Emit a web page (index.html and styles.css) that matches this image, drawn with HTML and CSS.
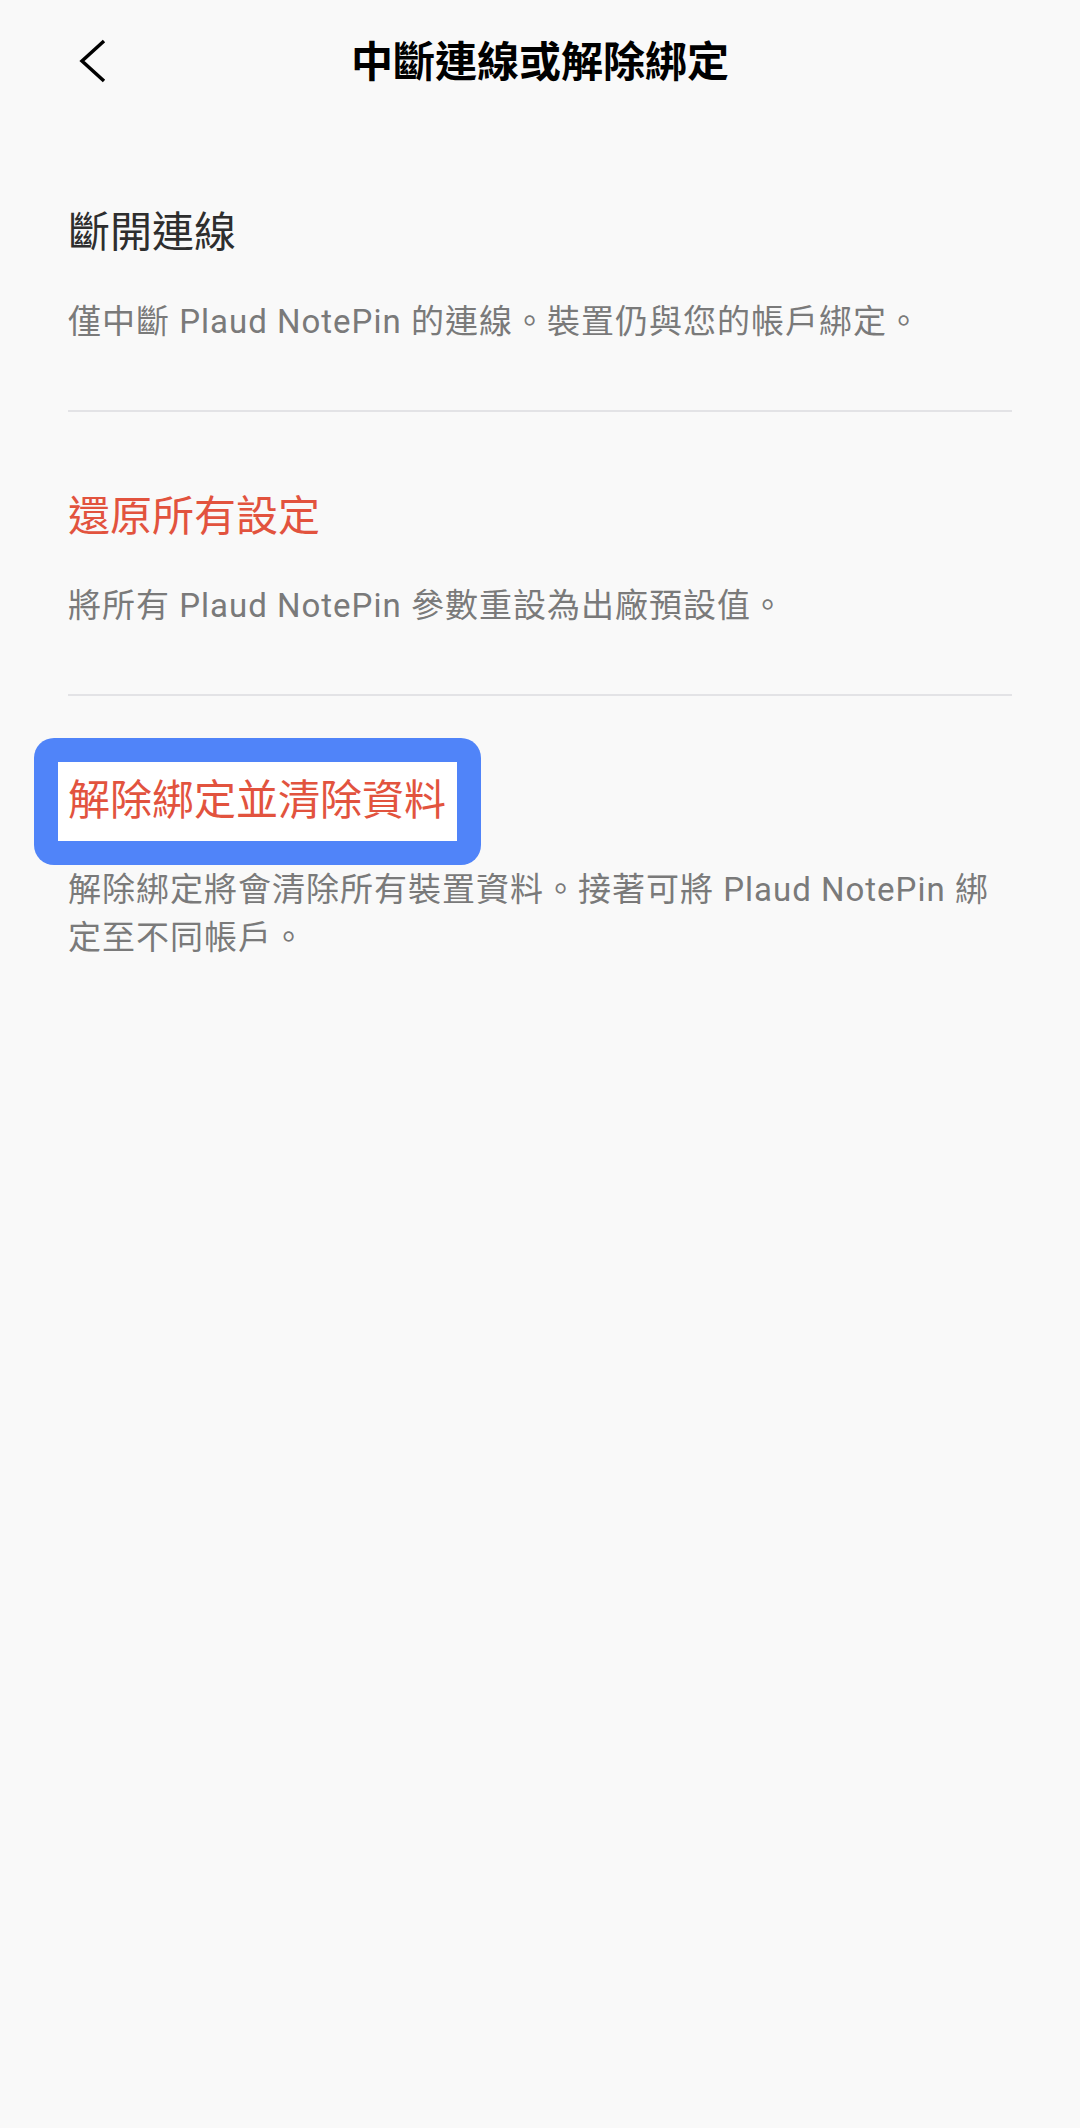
FILE: index.html
```html
<!DOCTYPE html>
<html lang="zh-Hant">
<head>
    <meta charset="UTF-8">
    <meta name="viewport" content="width=device-width, initial-scale=1.0">
    <title>中斷連線或解除綁定</title>
    <link rel="stylesheet" href="styles.css">
</head>
<body>
    <header class="topbar">
        <button class="back" aria-label="返回">
            <svg width="40" height="60" viewBox="0 0 40 60">
                <path d="M32 10 L10 30 L32 50" fill="none" stroke="#000" stroke-width="3.5"/>
            </svg>
        </button>
        <h1 class="topbar-title">中斷連線或解除綁定</h1>
        <span></span>
    </header>

    <main class="options">
        <section class="option">
            <div class="option-title">斷開連線</div>
            <p class="option-desc">僅中斷 Plaud NotePin 的連線。裝置仍與您的帳戶綁定。</p>
        </section>
        <section class="option">
            <div class="option-title danger">還原所有設定</div>
            <p class="option-desc">將所有 Plaud NotePin 參數重設為出廠預設值。</p>
        </section>
        <section class="option">
            <div class="option-title danger"><span class="focus">解除綁定並清除資料</span></div>
            <p class="option-desc">解除綁定將會清除所有裝置資料。接著可將 Plaud NotePin 綁定至不同帳戶。</p>
        </section>
    </main>
</body>
</html>
```

FILE: styles.css
```css
body {
    margin: 0;
    min-height: 100vh;
    background: #f9f9f9;
    font-family: Roboto, "Noto Sans CJK TC", sans-serif;
}
.topbar {
    display: grid;
    grid-template-columns: 1fr auto 1fr;
    align-items: center;
    height: 122px;
}
.back {
    justify-self: start;
    display: flex;
    margin-left: 72px;
    padding: 0;
    border: none;
    background: none;
    cursor: pointer;
}
.topbar-title {
    margin: 4px 0 0;
    font-size: 42px;
    font-weight: 700;
    line-height: 58px;
    color: #000;
}
.options {
    padding: 6px 68px 0;
}
.option {
    padding: 76px 0 64px;
    border-bottom: 2px solid #e3e3e6;
}
.option:last-child {
    border-bottom: none;
}
.option-title {
    font-size: 42px;
    line-height: 58px;
    color: #2e2e2e;
}
.option-title.danger {
    color: #e2533e;
}
.option-desc {
    margin: 36px 0 0;
    font-size: 33px;
    letter-spacing: 1px;
    line-height: 48px;
    color: #7a7a7a;
}
.focus {
    position: relative;
    display: inline-block;
    background: #fff;
    padding: 10px 11px 11px 10px;
    margin: -10px 0 -11px -10px;
}
.focus::before {
    content: "";
    position: absolute;
    top: -24px;
    right: -24px;
    bottom: -24px;
    left: -24px;
    background: #5084f9;
    border-radius: 20px;
    z-index: -1;
}
```
